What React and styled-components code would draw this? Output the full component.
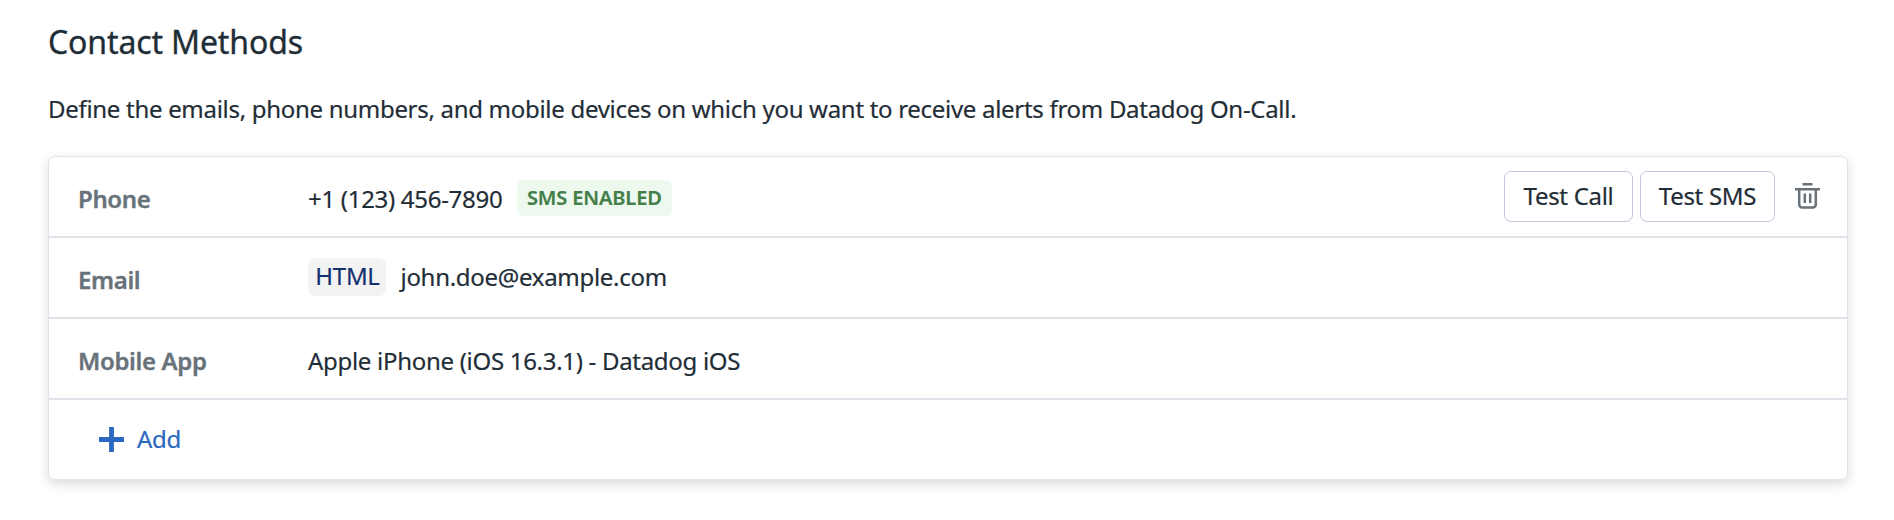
import React from "react";
import styled, { createGlobalStyle } from "styled-components";

const Global = createGlobalStyle`
  * { box-sizing: border-box; }
  body {
    margin: 0;
    background: #fff;
    color: #1f2d37;
    font-family: "Noto Sans", sans-serif;
    letter-spacing: -0.296px;
    -webkit-text-stroke: 0.2px currentColor;
  }
`;
const Page = styled.main`
  min-height: 100vh;
  padding: 18px 46px 0 48px;
`;
const Title = styled.h1`
  margin: 0;
  font-size: 32px;
  line-height: 48px;
  font-weight: 400;
  letter-spacing: -0.13px;
  -webkit-text-stroke-width: 0.35px;
`;
const Intro = styled.p`
  margin: 25px 0 29px;
  font-size: 24px;
  line-height: 36px;
`;
const Card = styled.section`
  border: 1px solid #e0e3ec;
  border-bottom-color: #e4e5e8;
  border-radius: 7px;
  box-shadow: 0 4px 12px rgba(0, 0, 0, 0.14);
`;
const Row = styled.div`
  display: flex;
  align-items: center;
  height: 81px;
  padding: 0 27px 0 29px;
  border-bottom: 2px solid #e0e4ea;

  &:last-child {
    height: 79px;
    padding-bottom: 1px;
    border-bottom: 0;
  }
`;
const Label = styled.div`
  width: 230px;
  padding-top: 4px;
  color: #68727a;
  font-size: 24px;
  line-height: 36px;
  font-weight: 600;
  letter-spacing: -0.36px;
  -webkit-text-stroke-width: 0.35px;
`;
const Value = styled.div`
  display: flex;
  align-items: center;
  flex: 1;
  font-size: 24px;
  line-height: 36px;
  padding-bottom: ${(p) => p.$lift || 0}px;
`;
const Text = styled.span`
  padding-top: ${(p) => p.$drop || 0}px;
`;
const Sms = styled.span`
  margin: 3px 0 0 15px;
  width: 155px;
  height: 36px;
  padding-right: 1px;
  text-align: center;
  line-height: 35px;
  border-radius: 7px;
  background: #edf8ef;
  color: #437e49;
  font-size: 20px;
  font-weight: 600;
  letter-spacing: -0.12px;
`;
const Format = styled.span`
  margin-right: 14.5px;
  width: 78px;
  height: 38px;
  padding-left: 1px;
  text-align: center;
  line-height: 36px;
  border-radius: 7px;
  background: #f3f3f4;
  color: #14306f;
`;
const Actions = styled.div`
  display: flex;
  align-items: center;
  gap: 7px;
`;
const Button = styled.button`
  width: ${(p) => p.$w}px;
  height: 51px;
  padding: 0 0 2px;
  border: 1px solid #c3c7da;
  border-radius: 7px;
  background: #fff;
  color: inherit;
  font: 24px/36px "Noto Sans", sans-serif;
  letter-spacing: -0.3px;
`;
const IconButton = styled.button`
  display: flex;
  margin: 0 0 2px 13px;
  padding: 0;
  border: 0;
  background: none;
  color: #68727a;
`;
const Add = styled.a`
  display: flex;
  align-items: center;
  gap: 13px;
  padding-left: 21px;
  color: #2b68bf;
  font-size: 24px;
  line-height: 36px;
`;

const Trash = () => (
  <svg width="25" height="28" viewBox="0 0 25 28" fill="none" stroke="currentColor" strokeWidth="2.5">
    <path d="M7.5 2.2h10M0 7.2h25" />
    <path d="M4.2 7.2v15.3a3 3 0 0 0 3 3h10.6a3 3 0 0 0 3-3V7.2M9.8 11.5v9.4M15.2 11.5v9.4" />
  </svg>
);
const Plus = () => (
  <svg width="25" height="25" viewBox="0 0 25 25" fill="none" stroke="currentColor" strokeWidth="4.8">
    <path d="M12.5 0v25M0 12.5h25" />
  </svg>
);

export default function App() {
  return (
    <Page>
      <Global />
      <Title>Contact Methods</Title>
      <Intro>Define the emails, phone numbers, and mobile devices on which you want to receive alerts from Datadog On-Call.</Intro>
      <Card>
        <Row>
          <Label>Phone</Label>
          <Value>
            <Text $drop={4}>+1 (123) 456-7890</Text>
            <Sms>SMS ENABLED</Sms>
          </Value>
          <Actions>
            <Button $w={129}>Test Call</Button>
            <Button $w={135}>Test SMS</Button>
            <IconButton aria-label="Delete"><Trash /></IconButton>
          </Actions>
        </Row>
        <Row>
          <Label>Email</Label>
          <Value $lift={2}>
            <Format>HTML</Format>
            <Text>john.doe@example.com</Text>
          </Value>
        </Row>
        <Row>
          <Label>Mobile App</Label>
          <Value><Text $drop={4}>Apple iPhone (iOS 16.3.1) - Datadog iOS</Text></Value>
        </Row>
        <Row>
          <Add><Plus />Add</Add>
        </Row>
      </Card>
    </Page>
  );
}
